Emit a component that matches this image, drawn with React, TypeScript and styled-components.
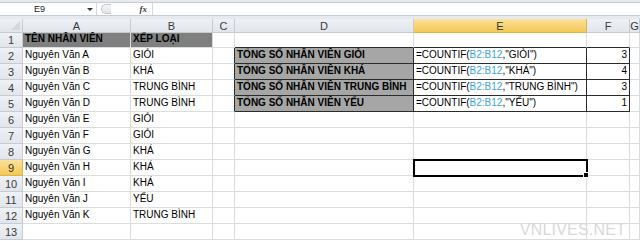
import React from "react";
import styled, { createGlobalStyle, css } from "styled-components";

const GRID = "#dadcdd";
const DARK = "#2b2b2b";

const GlobalStyle = createGlobalStyle`
  html, body {
    margin: 0;
    padding: 0;
    background: #ffffff;
    overflow: hidden;
  }
  body {
    font-family: "Liberation Sans", Arial, sans-serif;
  }
`;

type Col = "A" | "B" | "C" | "D" | "E" | "F" | "G";
const COLS: Col[] = ["A", "B", "C", "D", "E", "F", "G"];

const names = ["A", "B", "C", "D", "E", "F", "G", "H", "I", "J", "K"];
const ranks = [
  "GIỎI",
  "KHÁ",
  "TRUNG BÌNH",
  "TRUNG BÌNH",
  "GIỎI",
  "GIỎI",
  "KHÁ",
  "KHÁ",
  "KHÁ",
  "YẾU",
  "TRUNG BÌNH",
];

const summary = [
  { label: "TỔNG SỐ NHÂN VIÊN GIỎI", crit: "GIỎI", count: 3 },
  { label: "TỔNG SỐ NHÂN VIÊN KHÁ", crit: "KHÁ", count: 4 },
  { label: "TỔNG SỐ NHÂN VIÊN TRUNG BÌNH", crit: "TRUNG BÌNH", count: 3 },
  { label: "TỔNG SỐ NHÂN VIÊN YẾU", crit: "YẾU", count: 1 },
];

export default function App() {
  const rows: React.ReactNode[] = [];

  for (let r = 1; r <= 13; r++) {
    rows.push(
      <RowHead key={`h${r}`} $active={r === 9}>
        {r}
      </RowHead>
    );
    COLS.forEach((c) => {
      const key = `${c}${r}`;
      const inTable = r >= 2 && r <= 5;
      const tableCol = c === "D" || c === "E" || c === "F";
      // dark borders around the summary table D2:F5
      const darkRight = inTable && (c === "C" || tableCol);
      const darkBottom = (r === 1 || inTable) && tableCol;

      let content: React.ReactNode = null;
      let fill: string | undefined;
      let bold = false;
      let right = false;

      if (r === 1 && (c === "A" || c === "B")) {
        fill = "#7f7f7f";
        bold = true;
        content = c === "A" ? "TÊN NHÂN VIÊN" : "XẾP LOẠI";
      } else if (r >= 2 && r <= 12 && c === "A") {
        content = `Nguyên Văn ${names[r - 2]}`;
      } else if (r >= 2 && r <= 12 && c === "B") {
        content = ranks[r - 2];
      } else if (inTable) {
        const s = summary[r - 2];
        if (c === "D") {
          fill = "#a6a6a6";
          bold = true;
          content = s.label;
        } else if (c === "E") {
          content = (
            <>
              =COUNTIF(<Ref>B2:B12</Ref>,"{s.crit}")
            </>
          );
        } else if (c === "F") {
          right = true;
          content = s.count;
        }
      }

      rows.push(
        <Cell
          key={key}
          $fill={fill}
          $bold={bold}
          $right={right}
          $darkRight={darkRight}
          $darkBottom={darkBottom}
          $selected={key === "E9"}
        >
          {content}
        </Cell>
      );
    });
  }

  return (
    <Page>
      <GlobalStyle />
      <FormulaArea>
        <FormulaBar>
          <NameBox>
            <NameText>E9</NameText>
            <DropArrow />
          </NameBox>
          <Grip />
          <FxBox>
            <Fx>fx</Fx>
          </FxBox>
          <FormulaInput />
        </FormulaBar>
      </FormulaArea>
      <Sheet>
        <Corner>
          <CornerTriangle />
        </Corner>
        {COLS.map((c) => (
          <ColHead key={c} $active={c === "E"}>
            {c}
          </ColHead>
        ))}
        {rows}
        <Watermark>VNLIVES.NET</Watermark>
      </Sheet>
    </Page>
  );
}

const Page = styled.div`
  width: 640px;
  height: 241px;
  overflow: hidden;
  display: flex;
  flex-direction: column;
  background: #ffffff;
`;

const FormulaArea = styled.div`
  height: 19px;
  background: #e6eaef;
  padding: 2px 0 3px;
  box-sizing: border-box;
`;

const FormulaBar = styled.div`
  height: 14px;
  display: flex;
  background: #ffffff;
  border-top: 1px solid #c6ccd4;
  border-bottom: 1px solid #c6ccd4;
  box-sizing: border-box;
`;

const NameBox = styled.div`
  width: 96px;
  display: flex;
  align-items: center;
  border-right: 1px solid #d5d9df;
`;

const NameText = styled.span`
  flex: 1;
  text-align: center;
  font-size: 9px;
  color: #222;
  padding-right: 8px;
`;

const DropArrow = styled.span`
  width: 0;
  height: 0;
  margin-right: 3px;
  border-left: 3px solid transparent;
  border-right: 3px solid transparent;
  border-top: 3px solid #333;
`;

const Grip = styled.div`
  width: 9px;
  margin: 1px 0 1px 4px;
  border: 1px solid #c2c7ce;
  border-right: none;
  border-radius: 6px 0 0 6px;
  background: linear-gradient(#f4f5f7, #e1e4e8);
`;

const FxBox = styled.div`
  width: 36px;
  display: flex;
  align-items: center;
  justify-content: flex-end;
  padding-right: 5px;
  border-right: 1px solid #d5d9df;
`;

const Fx = styled.span`
  font-family: "Liberation Serif", serif;
  font-style: italic;
  font-weight: bold;
  font-size: 9px;
  color: #444;
`;

const FormulaInput = styled.div`
  flex: 1;
`;

const Sheet = styled.div`
  position: relative;
  display: grid;
  grid-template-columns: 23px 108px 82px 22px 179px 173px 43px 10px;
  grid-template-rows: 14px 15px repeat(12, 16px);
  font-size: 10px;
  color: #000;
`;

const headBase = css`
  box-sizing: border-box;
  border-right: 1px solid #c5cbd3;
  border-bottom: 1px solid #c5cbd3;
  background: linear-gradient(#eef1f5, #e1e6ec);
  color: #3b3b3b;
  font-size: 11px;
  display: flex;
  align-items: center;
  justify-content: center;
  overflow: hidden;
`;

const activeHead = css`
  background: linear-gradient(#fbe29a, #f3c855);
  border-right-color: #e2b24a;
  border-bottom-color: #e2b24a;
  color: #333;
`;

const Corner = styled.div`
  ${headBase};
  position: relative;
`;

const CornerTriangle = styled.span`
  position: absolute;
  right: 2px;
  bottom: 2px;
  width: 0;
  height: 0;
  border-left: 9px solid transparent;
  border-bottom: 9px solid #d3d8de;
`;

const ColHead = styled.div<{ $active?: boolean }>`
  ${headBase};
  ${(p) => p.$active && activeHead};
`;

const RowHead = styled.div<{ $active?: boolean }>`
  ${headBase};
  align-items: flex-end;
  padding-bottom: 1px;
  ${(p) => p.$active && activeHead};
`;

const Cell = styled.div<{
  $fill?: string;
  $bold?: boolean;
  $right?: boolean;
  $darkRight?: boolean;
  $darkBottom?: boolean;
  $selected?: boolean;
}>`
  position: relative;
  box-sizing: border-box;
  border-right: 1px solid ${(p) => (p.$darkRight ? DARK : GRID)};
  border-bottom: 1px solid ${(p) => (p.$darkBottom ? DARK : GRID)};
  background: ${(p) => p.$fill ?? "#ffffff"};
  font-weight: ${(p) => (p.$bold ? "bold" : "normal")};
  display: flex;
  align-items: flex-end;
  justify-content: ${(p) => (p.$right ? "flex-end" : "flex-start")};
  padding: 0 2px 1px 2px;
  white-space: nowrap;
  line-height: 14px;
  overflow: visible;

  ${(p) =>
    p.$selected &&
    css`
      outline: 2px solid #000;
      outline-offset: -1px;
      z-index: 2;
      &::after {
        content: "";
        position: absolute;
        right: -3px;
        bottom: -3px;
        width: 4px;
        height: 4px;
        background: #000;
        border: 1px solid #fff;
      }
    `}
`;

const Ref = styled.span`
  color: #3aa3e3;
`;

const Watermark = styled.div`
  position: absolute;
  right: 14px;
  bottom: 1px;
  font-size: 16px;
  color: #d9d9d9;
  letter-spacing: 0.2px;
  pointer-events: none;
`;
